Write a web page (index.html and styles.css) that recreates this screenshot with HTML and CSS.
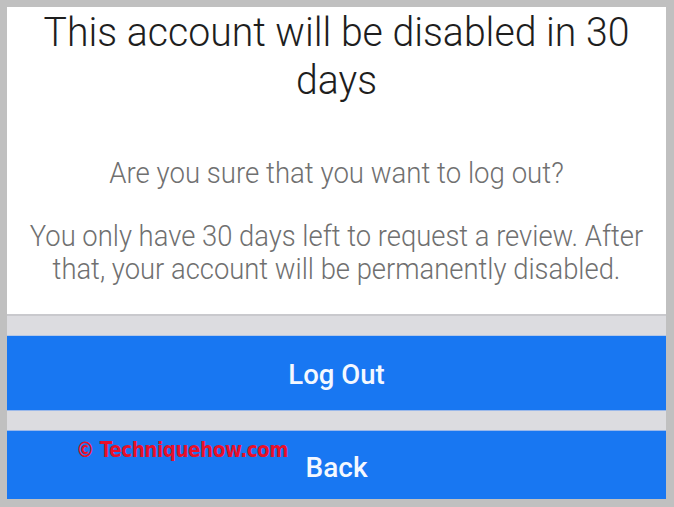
FILE: index.html
```html
<!DOCTYPE html>
<html>
<head>
<meta charset="utf-8">
<link rel="stylesheet" href="styles.css">
</head>
<body>
<div class="frame">
  <div class="dialog">
    <div class="panel">
      <h1 class="title">This account will be disabled in 30 days</h1>
      <p class="question">Are you sure that you want to log out?</p>
      <p class="info">You only have 30 days left to request a review. After that, your account will be permanently disabled.</p>
    </div>
    <div class="sep sep-top"></div>
    <div class="btn btn-logout">Log Out</div>
    <div class="sep sep-mid"></div>
    <div class="btn btn-back">Back
      <span class="watermark">© Techniquehow.com</span>
    </div>
  </div>
</div>
</body>
</html>
```
FILE: styles.css
```css
html, body {
  margin: 0;
  padding: 0;
  background: #c0c0c0;
}
.frame {
  width: 674px;
  height: 507px;
  box-sizing: border-box;
  padding: 7px 8px 8px 7px;
}
.dialog {
  display: flex;
  flex-direction: column;
  height: 100%;
  background: #dcdce0;
}
.panel {
  background: #fff;
  height: 309px;
  box-sizing: border-box;
  padding: 3px 10px 0;
  text-align: center;
  font-family: Roboto, "Liberation Sans", sans-serif;
  font-weight: 300;
  border-bottom: 2px solid #c9c9cd;
}
.title {
  margin: 0 auto;
  width: 600px;
  font-size: 39.2px;
  line-height: 46px;
  font-weight: 300;
  color: #1e1e1e;
  transform: scaleY(1.05);
}
.question {
  margin: 56px 0 0;
  font-size: 27.6px;
  line-height: 30px;
  color: #707070;
  transform: scaleY(1.1);
}
.info {
  margin: 35px 0 0;
  font-size: 27.4px;
  line-height: 30px;
  color: #707070;
  transform: scaleY(1.1);
}
.sep-top {
  height: 19px;
  border-bottom: 1px solid #b6c8e6;
}
.sep-mid {
  height: 19px;
  border-top: 1px solid #9ab8ea;
  border-bottom: 1px solid #9ab8ea;
}
.btn {
  background: #1877f2;
  color: #f4f8ff;
  font-family: Roboto, "Liberation Sans", sans-serif;
  font-weight: 500;
  font-size: 27.5px;
  display: flex;
  align-items: center;
  justify-content: center;
}
.btn-logout {
  height: 74px;
  box-sizing: border-box;
  padding-top: 3px;
}
.btn-back {
  flex: 1;
  position: relative;
  padding-top: 5px;
  font-size: 28px;
}
.watermark {
  position: absolute;
  left: 69px;
  top: 7px;
  color: #e8102a;
  font-family: "DejaVu Sans Condensed", "DejaVu Sans", sans-serif;
  font-stretch: condensed;
  font-weight: bold;
  font-size: 20.5px;
  letter-spacing: -0.5px;
}
```
